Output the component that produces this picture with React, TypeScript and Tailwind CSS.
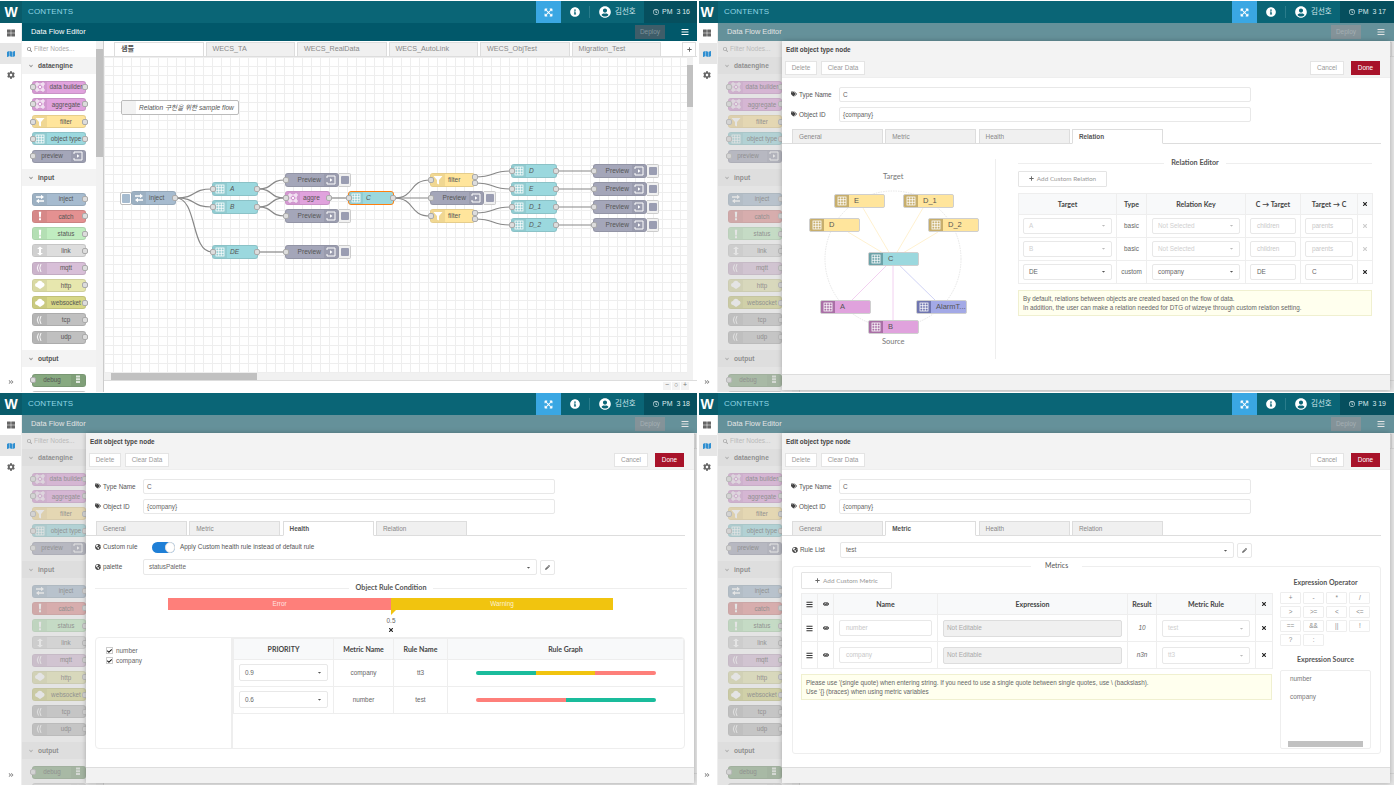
import React from "react";
import {
  FaAngleDoubleRight,
  FaAngleDown,
  FaBars,
  FaCaretDown,
  FaCheck,
  FaCog,
  FaEye,
  FaGlobeAmericas,
  FaInfoCircle,
  FaMap,
  FaPencilAlt,
  FaPlus,
  FaRegClock,
  FaSearch,
  FaTags,
  FaThLarge,
  FaTimes,
  FaUserCircle,
  FaExpandArrowsAlt,
} from "react-icons/fa";

type Glyph = "table" | "builder" | "filter" | "preview" | "inject" | "bang" | "link" | "wave" | "cloud" | "debug";

const NodeGlyph = ({ kind }: { kind: Glyph }) => {
  const common = { width: 10, height: 10, viewBox: "0 0 10 10" };
  if (kind === "table")
    return (
      <svg {...common} stroke="#fff" strokeWidth="0.8" fill="none">
        <rect x="1" y="1" width="8" height="8" />
        <path d="M3.7 1v8M6.3 1v8M1 3.7h8M1 6.3h8" />
      </svg>
    );
  if (kind === "builder")
    return (
      <svg {...common} stroke="#fff" strokeWidth="0.9" fill="none">
        <path d="M1 1h2v2H1zM7 1h2v2H7zM1 7h2v2H1zM7 7h2v2H7zM3 2h4M3 8h4M2 3v4M8 3v4M3.5 3.5l3 3M6.5 3.5l-3 3" />
      </svg>
    );
  if (kind === "filter")
    return (
      <svg {...common} fill="#fff">
        <path d="M0.5 1h9L6 5v4.5L4 8.5V5z" />
      </svg>
    );
  if (kind === "preview")
    return (
      <svg {...common} stroke="#fff" strokeWidth="1" fill="none">
        <path d="M1 3V1h8v8H1V7" />
        <path d="M4 3.2L6.5 5 4 6.8z" fill="#fff" stroke="none" />
      </svg>
    );
  if (kind === "inject")
    return (
      <svg {...common} fill="#fff">
        <path d="M1 2.2h5V0.8l3 2.2-3 2.2V3.8H1zM9 6.2H4V4.8L1 7l3 2.2V7.8h5z" />
      </svg>
    );
  if (kind === "bang")
    return (
      <svg {...common} fill="#fff">
        <path d="M3.8 0.8h2.4L5.8 6.4H4.2zM4 7.2h2v2H4z" />
      </svg>
    );
  if (kind === "link")
    return (
      <svg {...common} fill="#fff">
        <path d="M5 0.5L8 3H6v4h2l-3 2.5L2 7h2V3H2z" />
      </svg>
    );
  if (kind === "wave")
    return (
      <svg {...common} stroke="#fff" strokeWidth="0.9" fill="none">
        <path d="M3.5 1.5Q1 5 3.5 8.5M6 1Q3.5 5 6 9" />
      </svg>
    );
  if (kind === "cloud")
    return (
      <svg {...common} fill="#fff">
        <path d="M2 7a2 2 0 0 1 0-4 3 3 0 0 1 5.6-0.6A2.4 2.4 0 0 1 8 7L5 9z" />
      </svg>
    );
  return (
    <svg {...common} fill="#fff" opacity="0.75">
      <path d="M3 0.5h4v2H3zM3 3.2h4v2H3zM3 5.9h4v2H3z" />
    </svg>
  );
};

const Port = ({ side }: { side: "left" | "right" }) => (
  <span
    className={`absolute top-1/2 -mt-[3px] h-[6px] w-[6px] rounded-[2px] border border-[#aaaaaa] bg-[#dddddd] ${
      side === "left" ? "-left-[3px]" : "-right-[3px]"
    }`}
  />
);

interface FlowNodeProps {
  label: string;
  color: string;
  glyph: Glyph;
  iconRight?: boolean;
  italic?: boolean;
  selected?: boolean;
  inPort?: boolean;
  outPort?: boolean;
  labelClass?: string;
}

const FlowNode = ({
  label,
  color,
  glyph,
  iconRight,
  italic,
  selected,
  inPort = true,
  outPort = true,
  labelClass = "text-center text-[6.3px]",
}: FlowNodeProps) => (
  <div
    className={`relative flex h-full w-full items-center rounded-[3px] border ${color} ${
      selected ? "border-[#ff7f0e]" : "border-[#0000001a]"
    } ${iconRight ? "flex-row-reverse" : ""}`}
  >
    <span
      className={`flex h-full w-[14px] shrink-0 items-center justify-center bg-[#0000000f] ${
        iconRight ? "rounded-r-[3px]" : "rounded-l-[3px]"
      }`}
    >
      <NodeGlyph kind={glyph} />
    </span>
    <span className={`flex-1 truncate text-[#555] ${labelClass} ${italic ? "italic" : ""}`}>{label}</span>
    {inPort && <Port side="left" />}
    {outPort && <Port side="right" />}
  </div>
);

const paletteSections: {
  name: string;
  nodes: { label: string; color: string; glyph: Glyph; iconRight?: boolean; noOut?: boolean; noIn?: boolean }[];
}[] = [
  {
    name: "dataengine",
    nodes: [
      { label: "data builder", color: "bg-[#e0a2dd]", glyph: "builder" },
      { label: "aggregate", color: "bg-[#e0a2dd]", glyph: "builder" },
      { label: "filter", color: "bg-[#ffe59c]", glyph: "filter" },
      { label: "object type", color: "bg-[#9bd8de]", glyph: "table" },
      { label: "preview", color: "bg-[#a4a6b9]", glyph: "preview", iconRight: true, noOut: true },
    ],
  },
  {
    name: "input",
    nodes: [
      { label: "inject", color: "bg-[#a6bbcf]", glyph: "inject", noIn: true },
      { label: "catch", color: "bg-[#e49191]", glyph: "bang", noIn: true },
      { label: "status", color: "bg-[#c0edc0]", glyph: "bang", noIn: true },
      { label: "link", color: "bg-[#dddddd]", glyph: "link", noIn: true },
      { label: "mqtt", color: "bg-[#d8bfd8]", glyph: "wave", noIn: true },
      { label: "http", color: "bg-[#e7e7ae]", glyph: "cloud", noIn: true },
      { label: "websocket", color: "bg-[#d7d787]", glyph: "cloud", noIn: true },
      { label: "tcp", color: "bg-[#c0c0c0]", glyph: "wave", noIn: true },
      { label: "udp", color: "bg-[#c0c0c0]", glyph: "wave", noIn: true },
    ],
  },
  {
    name: "output",
    nodes: [
      { label: "debug", color: "bg-[#87a980]", glyph: "debug", iconRight: true, noOut: true },
      { label: "link", color: "bg-[#dddddd]", glyph: "link", iconRight: true, noOut: true },
    ],
  },
];

const Palette = () => (
  <div className="flex h-full w-[82px] shrink-0 overflow-hidden border-r border-[#cccccc] bg-white">
    <div className="w-[74px] shrink-0">
      <div className="flex h-[16px] items-center gap-[2px] pl-[5px] text-[6.5px] text-[#aaaaaa]">
        <FaSearch className="text-[5px] text-[#888]" />
        Filter Nodes...
      </div>
      {paletteSections.map((section) => (
        <div key={section.name}>
          <div className="flex h-[17px] items-center gap-[4px] bg-[#f3f3f3] pl-[6px] text-[6.6px] font-bold text-[#555]">
            <FaAngleDown className="text-[6px] font-normal text-[#999]" />
            {section.name}
          </div>
          <div className="flex flex-col gap-[4.25px] pb-[6.5px] pl-[10px] pt-[6.5px]">
            {section.nodes.map((n) => (
              <div key={n.label + n.color} className="h-[13px] w-[54px] shrink-0">
                <FlowNode
                  label={n.label}
                  color={n.color}
                  glyph={n.glyph}
                  iconRight={n.iconRight}
                  inPort={!n.noIn}
                  outPort={!n.noOut}
                />
              </div>
            ))}
          </div>
        </div>
      ))}
    </div>
    <div className="flex w-[7px] shrink-0 flex-col items-center bg-[#f1f1f1] pt-[8px]">
      <div className="h-[108px] w-full bg-[#c1c1c1]" />
    </div>
  </div>
);

const Header = ({ time }: { time: string }) => (
  <div className="flex h-[22px] items-stretch bg-[#0a6576] text-white">
    <div className="flex w-[22px] shrink-0 items-center justify-center bg-[#0a5b6a] text-[14px] font-bold">W</div>
    <div className="flex w-[514px] shrink-0 items-center pl-[6px] text-[8px] tracking-[0.15px] text-[#8fd6e4]">
      CONTENTS
    </div>
    <div className="flex w-[25px] shrink-0 items-center justify-center bg-[#3aa7e3]">
      <FaExpandArrowsAlt className="text-[9px]" />
    </div>
    <div className="flex w-[28px] shrink-0 items-center justify-center">
      <FaInfoCircle className="text-[10px]" />
    </div>
    <div className="my-[5px] w-px shrink-0 bg-[#2a7c8b]" />
    <div className="flex w-[54px] shrink-0 items-center gap-[4px] pl-[9px] text-[7.5px] text-[#cfe5ea]">
      <FaUserCircle className="shrink-0 text-[12px] text-white" />
      김선호
    </div>
    <div className="flex flex-1 items-center gap-[3px] whitespace-pre bg-[#064f5e] pl-[9px] text-[7px] text-[#dcebee]">
      <FaRegClock className="text-[6px]" />
      {time}
    </div>
  </div>
);

const SubBar = () => (
  <div className="flex h-[18px] items-center bg-[#01586a]">
    <span className="w-[550px] pl-[9px] text-[7.4px] text-white">Data Flow Editor</span>
    <div className="ml-[63px] flex h-[14px] w-[30px] items-center justify-center bg-[#3e5d69] text-[6.5px] text-[#7f939c]">
      Deploy
    </div>
    <FaBars className="ml-[16px] text-[8px] text-white" />
  </div>
);

const Rail = () => (
  <div className="flex h-full w-[22px] shrink-0 flex-col items-center border-r border-[#eeeeee] bg-white pb-[7px] text-[#666]">
    <div className="flex h-[20px] w-full items-center justify-center">
      <FaThLarge className="text-[8px]" />
    </div>
    <div className="flex h-[21px] w-full items-center justify-center bg-[#e6e6e6]">
      <FaMap className="text-[8px] text-[#2f8fd1]" />
    </div>
    <div className="flex h-[21px] w-full items-center justify-center">
      <FaCog className="text-[8px]" />
    </div>
    <FaAngleDoubleRight className="mt-auto text-[6px] text-[#888]" />
  </div>
);

const canvasNodes: {
  x: number;
  y: number;
  w: number;
  label: string;
  color: string;
  glyph: Glyph;
  iconRight?: boolean;
  italic?: boolean;
  selected?: boolean;
  noIn?: boolean;
  noOut?: boolean;
  button?: boolean;
}[] = [
  { x: 131, y: 191, w: 45, label: "inject", color: "bg-[#a6bbcf]", glyph: "inject", noIn: true },
  { x: 212, y: 182, w: 46, label: "A", color: "bg-[#9bd8de]", glyph: "table", italic: true },
  { x: 212, y: 200, w: 46, label: "B", color: "bg-[#9bd8de]", glyph: "table", italic: true },
  { x: 212, y: 245, w: 46, label: "DE", color: "bg-[#9bd8de]", glyph: "table", italic: true },
  { x: 285, y: 173, w: 54, label: "Preview", color: "bg-[#a4a6b9]", glyph: "preview", iconRight: true, noOut: true, button: true },
  { x: 285, y: 191, w: 45, label: "aggre", color: "bg-[#e0a2dd]", glyph: "builder" },
  { x: 285, y: 209, w: 54, label: "Preview", color: "bg-[#a4a6b9]", glyph: "preview", iconRight: true, noOut: true, button: true },
  { x: 285, y: 245, w: 54, label: "Preview", color: "bg-[#a4a6b9]", glyph: "preview", iconRight: true, noOut: true, button: true },
  { x: 348, y: 191, w: 46, label: "C", color: "bg-[#9bd8de]", glyph: "table", italic: true, selected: true },
  { x: 430, y: 173, w: 45, label: "filter", color: "bg-[#ffe59c]", glyph: "filter", noOut: true },
  { x: 430, y: 191, w: 54, label: "Preview", color: "bg-[#a4a6b9]", glyph: "preview", iconRight: true, noOut: true, button: true },
  { x: 430, y: 209, w: 45, label: "filter", color: "bg-[#ffe59c]", glyph: "filter", noOut: true },
  { x: 511, y: 164, w: 46, label: "D", color: "bg-[#9bd8de]", glyph: "table", italic: true },
  { x: 511, y: 182, w: 46, label: "E", color: "bg-[#9bd8de]", glyph: "table", italic: true },
  { x: 511, y: 200, w: 46, label: "D_1", color: "bg-[#9bd8de]", glyph: "table", italic: true },
  { x: 511, y: 218, w: 46, label: "D_2", color: "bg-[#9bd8de]", glyph: "table", italic: true },
  { x: 593, y: 164, w: 54, label: "Preview", color: "bg-[#a4a6b9]", glyph: "preview", iconRight: true, noOut: true, button: true },
  { x: 593, y: 182, w: 54, label: "Preview", color: "bg-[#a4a6b9]", glyph: "preview", iconRight: true, noOut: true, button: true },
  { x: 593, y: 200, w: 54, label: "Preview", color: "bg-[#a4a6b9]", glyph: "preview", iconRight: true, noOut: true, button: true },
  { x: 593, y: 218, w: 54, label: "Preview", color: "bg-[#a4a6b9]", glyph: "preview", iconRight: true, noOut: true, button: true },
];

const wires = [
  [176, 198, 212, 189],
  [176, 198, 212, 207],
  [176, 198, 212, 252],
  [258, 189, 285, 180],
  [258, 189, 285, 198],
  [258, 207, 285, 198],
  [258, 207, 285, 216],
  [258, 252, 285, 252],
  [330, 198, 348, 198],
  [394, 198, 430, 180],
  [394, 198, 430, 198],
  [394, 198, 430, 216],
  [475, 177, 511, 171],
  [475, 183, 511, 189],
  [475, 213, 511, 207],
  [475, 219, 511, 225],
  [557, 171, 593, 171],
  [557, 189, 593, 189],
  [557, 207, 593, 207],
  [557, 225, 593, 225],
];

const tabs = ["샘플", "WECS_TA", "WECS_RealData", "WECS_AutoLink", "WECS_ObjTest", "Migration_Test"];

const Canvas = () => (
  <div className="relative min-h-0 flex-1 overflow-hidden bg-white bg-[linear-gradient(#eeeeee_1px,transparent_1px),linear-gradient(90deg,#eeeeee_1px,transparent_1px)] bg-[size:9px_9px]">
    <svg className="absolute left-0 top-0" width="583" height="317" fill="none" stroke="#888" strokeWidth="1.2">
      {wires.map(([x1, y1, x2, y2], i) => {
        const a = x1 - 104;
        const b = y1 - 57;
        const c = x2 - 104;
        const d = y2 - 57;
        const k = Math.max(12, Math.min(22, (c - a) * 0.6));
        return <path key={i} d={`M${a} ${b}C${a + k} ${b} ${c - k} ${d} ${c} ${d}`} />;
      })}
    </svg>
    <div className="absolute left-[17px] top-[43px] flex h-[15px] w-[118px] items-center whitespace-nowrap rounded-[2px] border border-[#bbbbbb] bg-white text-[6.6px] italic text-[#555]">
      <span className="mr-[3px] h-full w-[14px] rounded-l-[2px] bg-[#f2f2f2]" />
      Relation 구현을 위한 sample flow
    </div>
    <div className="absolute left-[16px] top-[135px] flex h-[13px] w-[12px] items-center justify-center rounded-[2px] border border-[#bbbbbb] bg-white">
      <span className="h-[9px] w-[8px] rounded-[1px] bg-[#a6bbcf]" />
    </div>
    {canvasNodes.map((n, i) => (
      <div key={i} className="absolute h-[14px]" style={{ left: n.x - 104, top: n.y - 57, width: n.w }}>
        <FlowNode
          label={n.label}
          color={n.color}
          glyph={n.glyph}
          iconRight={n.iconRight}
          italic={n.italic}
          selected={n.selected}
          inPort={!n.noIn}
          outPort={!n.noOut}
          labelClass={n.iconRight ? "pr-[3px] text-right text-[6.6px]" : "pl-[3px] text-left text-[6.6px]"}
        />
        {n.button && (
          <div className="absolute -right-[12px] top-0 flex h-[14px] w-[12px] items-center justify-center rounded-r-[2px] border border-l-0 border-[#cccccc] bg-[#f0f0f0]">
            <span className="h-[8px] w-[8px] rounded-[1px] bg-[#9a9db2]" />
          </div>
        )}
      </div>
    ))}
    {[
      [475, 177],
      [475, 183],
      [475, 213],
      [475, 219],
    ].map(([x, y]) => (
      <span
        key={y}
        className="absolute h-[6px] w-[6px] rounded-[2px] border border-[#aaaaaa] bg-[#dddddd]"
        style={{ left: x - 107, top: y - 60 }}
      />
    ))}
  </div>
);

const Workspace = () => (
  <div className="flex h-full min-w-0 flex-1 flex-col bg-white">
    <div className="flex h-[16px] shrink-0 items-end gap-[2px] border-b border-[#dddddd] pl-[10px]">
      {tabs.map((t, i) => (
        <div
          key={t}
          className={`flex h-[14px] w-[89.5px] items-center border border-b-0 border-[#dddddd] pl-[6px] text-[7.2px] ${
            i === 0 ? "bg-white font-bold text-[#555]" : "bg-[#f0f0f0] text-[#888]"
          }`}
        >
          {t}
        </div>
      ))}
      <div className="ml-[19px] flex h-[14px] w-[14px] items-center justify-center border border-b-0 border-[#dddddd] bg-white">
        <FaPlus className="text-[5px] text-[#666]" />
      </div>
    </div>
    <div className="flex min-h-0 flex-1">
      <div className="flex w-[583px] min-w-0 flex-col">
        <Canvas />
        <div className="flex h-[7px] shrink-0 items-center bg-[#f1f1f1] pl-[7px]">
          <div className="h-full w-[146px] bg-[#c1c1c1]" />
        </div>
      </div>
      <div className="w-[6px] shrink-0 bg-[#f1f1f1] pt-[8px]">
        <div className="h-[42px] w-full bg-[#c1c1c1]" />
      </div>
    </div>
    <div className="mb-[2px] flex h-[10px] shrink-0 items-center justify-end gap-px border-t border-[#dddddd] pr-[8px]">
      {["−", "○", "+"].map((s) => (
        <span key={s} className="flex h-[8px] w-[8px] items-center justify-center bg-[#f3f3f3] text-[7px] text-[#777]">
          {s}
        </span>
      ))}
    </div>
  </div>
);

/* ---- edit tray ---- */

const lato = "[font-family:Lato,sans-serif]";

const Btn = ({ children, className = "" }: { children: React.ReactNode; className?: string }) => (
  <div
    className={`flex h-[14px] items-center justify-center border border-[#e4e4e4] bg-white text-[6.4px] text-[#999] ${className}`}
  >
    {children}
  </div>
);

const Input = ({
  value,
  className = "",
  faded,
  tight,
}: {
  value: string;
  className?: string;
  faded?: boolean;
  tight?: boolean;
}) => (
  <div
    className={`flex h-[15px] items-center rounded-[2px] border border-[#e8e8e8] bg-white text-[6.4px] ${
      tight ? "pl-[3px]" : "pl-[6px]"
    } ${faded ? "text-[#c8c8c8]" : "text-[#666]"} ${className}`}
  >
    {value}
  </div>
);

const Select = ({ value, className = "", faded }: { value: string; className?: string; faded?: boolean }) => (
  <div
    className={`flex h-[16px] items-center justify-between rounded-[2px] border border-[#e8e8e8] bg-white px-[5px] text-[6.4px] ${
      faded ? "text-[#cfcfcf]" : "text-[#666]"
    } ${className}`}
  >
    {value}
    <FaCaretDown className={`text-[5px] ${faded ? "text-[#bbb]" : "text-[#555]"}`} />
  </div>
);

const Fieldset = ({ title }: { title: string }) => (
  <div className="flex items-center gap-[7px]">
    <div className="h-px flex-1 bg-[#eeeeee]" />
    <span className={`${lato} text-[7.2px] font-bold text-[#555]`}>{title}</span>
    <div className="h-px flex-1 bg-[#eeeeee]" />
  </div>
);

const LabelRow = ({ label, children, globe }: { label: string; children: React.ReactNode; globe?: boolean }) => (
  <div className="flex items-center">
    <div className="flex w-[48px] shrink-0 items-center gap-[2px] text-[6.4px] text-[#555]">
      {globe ? <FaGlobeAmericas className="text-[6px] text-[#444]" /> : <FaTags className="text-[6px] text-[#444]" />}
      {label}
    </div>
    {children}
  </div>
);

const trayTabs = ["General", "Metric", "Health", "Relation"];

const Th = ({ children }: { children?: React.ReactNode }) => (
  <th className={`${lato} border border-[#eeeeee] bg-[#f8f9fa] p-0 text-center text-[7px] font-bold text-[#444]`}>
    {children}
  </th>
);

const Td = ({ children, className = "" }: { children?: React.ReactNode; className?: string }) => (
  <td className={`border border-[#eeeeee] p-0 text-center text-[6.4px] text-[#666] ${className}`}>{children}</td>
);

const Tray = ({ active, children }: { active: string; children: React.ReactNode }) => (
  <div className="absolute bottom-[2px] left-[86px] top-[40px] flex w-[608px] flex-col bg-white shadow-[0_0_5px_rgba(0,0,0,0.25)]">
    <div className="flex h-[17px] shrink-0 items-center bg-[#f3f3f3] pl-[4px] text-[6.4px] font-bold text-[#444]">
      Edit object type node
    </div>
    <div className="flex h-[20px] shrink-0 items-start gap-[4px] border-b border-[#eeeeee] bg-[#f3f3f3] pl-[3px] pr-[10px] pt-[3px]">
      <Btn className="w-[32px]">Delete</Btn>
      <Btn className="w-[44px]">Clear Data</Btn>
      <Btn className="ml-auto w-[34px]">Cancel</Btn>
      <div className="ml-[3px] flex h-[14px] w-[29px] items-center justify-center bg-[#a8132a] text-[6.4px] text-white">
        Done
      </div>
    </div>
    <div className="flex flex-col gap-[5px] pl-[9px] pt-[9px]">
      <LabelRow label="Type Name">
        <Input value="C" className="w-[412px]" tight />
      </LabelRow>
      <LabelRow label="Object ID">
        <Input value="{company}" className="w-[412px]" tight />
      </LabelRow>
    </div>
    <div className="mr-[9px] mt-[7px] flex h-[15px] shrink-0 items-end gap-[2.3px] border-b border-[#dddddd] pl-[10px]">
      {trayTabs.map((t) => (
        <div
          key={t}
          className={`-mb-px flex h-[15px] w-[91px] items-center border border-[#dddddd] pl-[6px] text-[6.4px] ${
            t === active ? "border-b-white bg-white font-bold text-[#555]" : "bg-[#f0f0f0] text-[#888]"
          }`}
        >
          {t}
        </div>
      ))}
    </div>
    <div className="min-h-0 flex-1 overflow-hidden">{children}</div>
    <div className="h-[16px] shrink-0 border-t border-[#dddddd] bg-[#f2f2f2]" />
  </div>
);

const graphNodes = [
  { x: 52, y: 35, label: "E", bg: "bg-[#ffe59c]", icon: "bg-[#c7ae6c]" },
  { x: 121, y: 35, label: "D_1", bg: "bg-[#ffe59c]", icon: "bg-[#c7ae6c]" },
  { x: 27, y: 59, label: "D", bg: "bg-[#ffe59c]", icon: "bg-[#c7ae6c]" },
  { x: 146, y: 59, label: "D_2", bg: "bg-[#ffe59c]", icon: "bg-[#c7ae6c]" },
  { x: 86, y: 93, label: "C", bg: "bg-[#9bd8de]", icon: "bg-[#6ca2a8]" },
  { x: 38, y: 141, label: "A", bg: "bg-[#e0a2dd]", icon: "bg-[#a96fa6]" },
  { x: 134, y: 141, label: "AlarmT...", bg: "bg-[#a3a9e6]", icon: "bg-[#6f75b0]" },
  { x: 86, y: 161, label: "B", bg: "bg-[#e0a2dd]", icon: "bg-[#a96fa6]" },
];

const RelationGraph = () => (
  <div className="relative h-[200px] w-[214px] shrink-0 border-r border-[#eeeeee]">
    <span className={`${lato} absolute left-[101px] top-[12px] text-[7.5px] text-[#777]`}>Target</span>
    <span className={`${lato} absolute left-[100px] top-[177px] text-[7.5px] text-[#777]`}>Source</span>
    <svg className="absolute left-0 top-0" width="214" height="200" fill="none" strokeWidth="0.8">
      <circle cx="111" cy="100" r="68" stroke="#e0e0e0" strokeDasharray="1.5 1" />
      <path d="M111 100L81 49M111 100L141 49M111 100L66 73M111 100L156 73" stroke="#ffeec4" />
      <path d="M111 100L70 141M111 100V161" stroke="#efc4ec" />
      <path d="M111 100L153 141" stroke="#c4c8f2" />
    </svg>
    {graphNodes.map((n) => (
      <div
        key={n.label}
        className={`absolute flex h-[14px] w-[51px] items-center overflow-hidden rounded-[2px] border border-[#cfcfcf] text-[7.5px] text-[#555] ${n.bg}`}
        style={{ left: n.x, top: n.y }}
      >
        <span className={`mr-[5px] flex h-full w-[14px] shrink-0 items-center justify-center ${n.icon}`}>
          <NodeGlyph kind="table" />
        </span>
        {n.label}
      </div>
    ))}
  </div>
);

const relationRows = [
  { target: "A", type: "basic", key: "Not Selected", to: "children", from: "parents", off: true },
  { target: "B", type: "basic", key: "Not Selected", to: "children", from: "parents", off: true },
  { target: "DE", type: "custom", key: "company", to: "DE", from: "C", off: false },
];

const RelationPanel = () => (
  <div className="flex pt-[15px]">
    <RelationGraph />
    <div className="-mt-[1px] ml-[22px] w-[354px]">
      <Fieldset title="Relation Editor" />
      <Btn className={`${lato} mt-[2px] h-[16px] w-[89px] gap-[3px] rounded-[1px] text-[#777]`}>
        <FaPlus className="text-[5px] text-[#666]" />
        Add Custom Relation
      </Btn>
      <table className="mt-[6px] w-[354px] table-fixed border-collapse">
        <colgroup>
          <col className="w-[98px]" />
          <col className="w-[30px]" />
          <col className="w-[99px]" />
          <col className="w-[55px]" />
          <col className="w-[57px]" />
          <col className="w-[15px]" />
        </colgroup>
        <thead>
          <tr className="h-[21px]">
            <Th>Target</Th>
            <Th>Type</Th>
            <Th>Relation Key</Th>
            <Th>C → Target</Th>
            <Th>Target → C</Th>
            <Th>
              <FaTimes className="mx-auto text-[6px] text-[#222]" />
            </Th>
          </tr>
        </thead>
        <tbody>
          {relationRows.map((r) => (
            <tr key={r.target} className="h-[23px]">
              <Td className="px-[4px]">
                <Select value={r.target} faded={r.off} />
              </Td>
              <Td>{r.type}</Td>
              <Td className="px-[5px]">
                <Select value={r.key} faded={r.off} />
              </Td>
              <Td className="px-[4px]">
                <Input value={r.to} faded={r.off} className="h-[16px] text-left" />
              </Td>
              <Td className="px-[4px]">
                <Input value={r.from} faded={r.off} className="h-[16px] text-left" />
              </Td>
              <Td>
                <FaTimes className={`mx-auto text-[6px] ${r.off ? "text-[#cccccc]" : "text-[#222]"}`} />
              </Td>
            </tr>
          ))}
        </tbody>
      </table>
      <div className="mt-[6px] flex h-[26px] flex-col justify-center border border-[#f0f0d0] bg-[#ffffee] pl-[4px] text-[6.35px] leading-[9px] text-[#666]">
        <div>By default, relations between objects are created based on the flow of data.</div>
        <div>In addition, the user can make a relation needed for DTG of wizeye through custom relation setting.</div>
      </div>
    </div>
  </div>
);

const PencilBtn = () => (
  <div className="ml-[3px] flex h-[15px] w-[15px] items-center justify-center rounded-[2px] border border-[#e8e8e8]">
    <FaPencilAlt className="text-[5px] text-[#666]" />
  </div>
);

const ruleRows = [
  { priority: "0.9", metric: "company", rule: "tt3", segs: ["w-[60px] bg-[#1abc9c]", "w-[59px] bg-[#f1c40f]", "w-[61px] bg-[#fe7f7a]"] },
  { priority: "0.6", metric: "number", rule: "test", segs: ["w-[90px] bg-[#fe7f7a]", "w-[90px] bg-[#1abc9c]"] },
];

const HealthPanel = () => (
  <div className="pl-[9px] pr-[6px] pt-[6px]">
    <div className="flex h-[10px] items-center text-[6.4px] text-[#555]">
      <div className="flex w-[57px] shrink-0 items-center gap-[2px]">
        <FaGlobeAmericas className="text-[6px] text-[#444]" />
        Custom rule
      </div>
      <div className="relative h-[11px] w-[23px] rounded-full bg-[#1f7fd6]">
        <span className="absolute right-0 top-0 h-[11px] w-[10px] rounded-full border border-[#dddddd] bg-white" />
      </div>
      <span className="ml-[5px]">Apply Custom health rule instead of default rule</span>
    </div>
    <div className="mt-[7px]">
      <LabelRow label="palette" globe>
        <Select value="statusPalette" className="w-[394px]" />
        <PencilBtn />
      </LabelRow>
    </div>
    <div className="mt-[8px] pr-[1px]">
      <Fieldset title="Object Rule Condition" />
    </div>
    <div className="ml-[73px] mt-[4px] flex h-[12px] w-[445px] text-[6.4px] text-[#ffffffcc]">
      <div className="flex w-[223px] items-center justify-center bg-[#fe7f7a]">Error</div>
      <div className="flex flex-1 items-center justify-center bg-[#f1c40f]">Warning</div>
    </div>
    <div className="ml-[296px] h-0 w-0 border-r-[5px] border-t-[5px] border-r-transparent border-t-[#f1c40f]" />
    <div className="ml-[273px] flex w-[46px] flex-col items-center text-[6.4px] leading-[9px] text-[#666]">
      <span className="mt-[1px]">0.5</span>
      <FaTimes className="mt-[2px] text-[6px] text-[#222]" />
    </div>
    <div className="mt-[4px] flex h-[112px] w-[590px] overflow-hidden rounded-[4px] border border-[#eeeeee]">
      <div className="w-[137px] shrink-0 border-r-2 border-[#eeeeee] pl-[10px] pt-[8px] text-[6.4px] text-[#666]">
        {["number", "company"].map((m) => (
          <div key={m} className="flex h-[10px] items-center gap-[3px]">
            <span className="flex h-[7px] w-[7px] items-center justify-center border border-[#cccccc] bg-white">
              <FaCheck className="text-[6px] text-[#111]" />
            </span>
            {m}
          </div>
        ))}
      </div>
      <table className="h-fit flex-1 table-fixed border-collapse">
        <colgroup>
          <col className="w-[100px]" />
          <col className="w-[60px]" />
          <col className="w-[54px]" />
          <col />
        </colgroup>
        <thead>
          <tr className="h-[21px]">
            <Th>PRIORITY</Th>
            <Th>Metric Name</Th>
            <Th>Rule Name</Th>
            <Th>Rule Graph</Th>
          </tr>
        </thead>
        <tbody>
          {ruleRows.map((r) => (
            <tr key={r.metric} className="h-[27px]">
              <Td className="px-[5px]">
                <Select value={r.priority} className="h-[17px]" />
              </Td>
              <Td>{r.metric}</Td>
              <Td>{r.rule}</Td>
              <Td>
                <div className="mx-auto flex h-[4px] w-[180px] overflow-hidden rounded-full">
                  {r.segs.map((s) => (
                    <div key={s} className={s} />
                  ))}
                </div>
              </Td>
            </tr>
          ))}
        </tbody>
      </table>
    </div>
  </div>
);

const metricRows = [
  { name: "number", result: "10", rule: "test" },
  { name: "company", result: "n3n", rule: "tt3" },
];

const operators = ["+", "-", "*", "/", ">", ">=", "<", "<=", "==", "&&", "||", "!", "?", ":"];

const MetricPanel = () => (
  <div className="pl-[10px] pr-[9px] pt-[6px]">
    <LabelRow label="Rule List" globe>
      <Select value="test" className="h-[15px] w-[394px]" />
      <PencilBtn />
    </LabelRow>
    <div className="relative mt-[8px] flex h-[188px] gap-[8px] rounded-[3px] border border-[#eeeeee] pl-[8px] pt-[5px]">
      <span className={`${lato} absolute -top-[7px] left-[238px] bg-white px-[14px] text-[7px] text-[#555]`}>Metrics</span>
      <div className="w-[471px] shrink-0">
        <Btn className={`${lato} h-[17px] w-[91px] gap-[3px] rounded-[1px] text-[#777]`}>
          <FaPlus className="text-[5px] text-[#666]" />
          Add Custom Metric
        </Btn>
        <table className="mt-[4px] w-[471px] table-fixed border-collapse">
          <colgroup>
            <col className="w-[16px]" />
            <col className="w-[16px]" />
            <col className="w-[104px]" />
            <col className="w-[190px]" />
            <col className="w-[29px]" />
            <col className="w-[99px]" />
            <col className="w-[17px]" />
          </colgroup>
          <thead>
            <tr className="h-[21px]">
              <Th>
                <FaBars className="mx-auto text-[7px] text-[#333]" />
              </Th>
              <Th>
                <FaEye className="mx-auto text-[6px] text-[#333]" />
              </Th>
              <Th>Name</Th>
              <Th>Expression</Th>
              <Th>Result</Th>
              <Th>Metric Rule</Th>
              <Th>
                <FaTimes className="mx-auto text-[6px] text-[#222]" />
              </Th>
            </tr>
          </thead>
          <tbody>
            {metricRows.map((r) => (
              <tr key={r.name} className="h-[27px]">
                <Td>
                  <FaBars className="mx-auto text-[7px] text-[#333]" />
                </Td>
                <Td>
                  <FaEye className="mx-auto text-[6px] text-[#333]" />
                </Td>
                <Td className="px-[5px]">
                  <Input value={r.name} faded className="h-[16px]" />
                </Td>
                <Td className="px-[5px]">
                  <div className="flex h-[17px] items-start rounded-[2px] border border-[#dddddd] bg-[#f0f0f0] pl-[3px] pt-[2px] text-[6.4px] text-[#aaa]">
                    Not Editable
                  </div>
                </Td>
                <Td className="italic">{r.result}</Td>
                <Td className="px-[5px]">
                  <Select value={r.rule} faded className="h-[17px]" />
                </Td>
                <Td>
                  <FaTimes className="mx-auto text-[6px] text-[#222]" />
                </Td>
              </tr>
            ))}
          </tbody>
        </table>
        <div className="mt-[5px] flex h-[26px] flex-col justify-center border border-[#f0f0d0] bg-[#ffffee] pl-[4px] text-[6.3px] leading-[9px] text-[#666]">
          <div>Please use '(single quote) when entering string. If you need to use a single quote between single quotes, use \ (backslash).</div>
          <div>Use '{"{}"} (braces) when using metric variables</div>
        </div>
      </div>
      <div className="w-[91px] shrink-0">
        <div className={`${lato} mt-[5px] text-center text-[7px] font-bold text-[#555]`}>Expression Operator</div>
        <div className="mt-[4px] grid grid-cols-4 gap-x-[1.5px] gap-y-[1.5px]">
          {operators.map((o) => (
            <div
              key={o}
              className="flex h-[12.5px] w-[21px] items-center justify-center rounded-[1px] border border-[#eeeeee] text-[6.4px] text-[#888]"
            >
              {o}
            </div>
          ))}
        </div>
        <div className={`${lato} mt-[8px] text-center text-[7px] font-bold text-[#555]`}>Expression Source</div>
        <div className="mt-[5px] flex h-[79px] flex-col rounded-[2px] border border-[#eeeeee] text-[6.4px] text-[#777]">
          <div className="flex flex-1 flex-col gap-[9px] pl-[9px] pt-[3px] leading-[9px]">
            <span>number</span>
            <span>company</span>
          </div>
          <div className="mx-[7px] mb-[1px] h-[6px] bg-[#c1c1c1]" />
        </div>
      </div>
    </div>
  </div>
);

const Window = ({
  time,
  tab,
  cropLeft,
}: {
  time: string;
  tab?: "Relation" | "Health" | "Metric";
  cropLeft?: boolean;
}) => (
  <div className="overflow-hidden pt-[1px]">
    <div className={`relative flex h-full flex-col ${cropLeft ? "-ml-[3px] w-[698px]" : "w-[697px]"}`}>
      <Header time={time} />
      <div className="flex min-h-0 flex-1">
        <Rail />
        <div className="flex min-w-0 flex-1 flex-col">
          <SubBar />
          <div className="flex min-h-0 flex-1">
            <Palette />
            <Workspace />
          </div>
        </div>
      </div>
      {tab && <div className="absolute bottom-0 left-[22px] right-0 top-[22px] bg-[#c9c9c9]/50" />}
      {tab && (
        <Tray active={tab}>
          {tab === "Relation" && <RelationPanel />}
          {tab === "Health" && <HealthPanel />}
          {tab === "Metric" && <MetricPanel />}
        </Tray>
      )}
    </div>
  </div>
);

export default function App() {
  return (
    <div className="grid h-[785px] w-[1394px] grid-cols-[697px_2px_695px] grid-rows-[392px_393px] overflow-hidden bg-white text-[#555] [font-family:'Liberation_Sans','Noto_Sans_CJK_KR',sans-serif]">
      <Window time="PM  3 16" />
      <div />
      <Window time="PM  3 17" tab="Relation" cropLeft />
      <Window time="PM  3 18" tab="Health" />
      <div />
      <Window time="PM  3 19" tab="Metric" cropLeft />
    </div>
  );
}
